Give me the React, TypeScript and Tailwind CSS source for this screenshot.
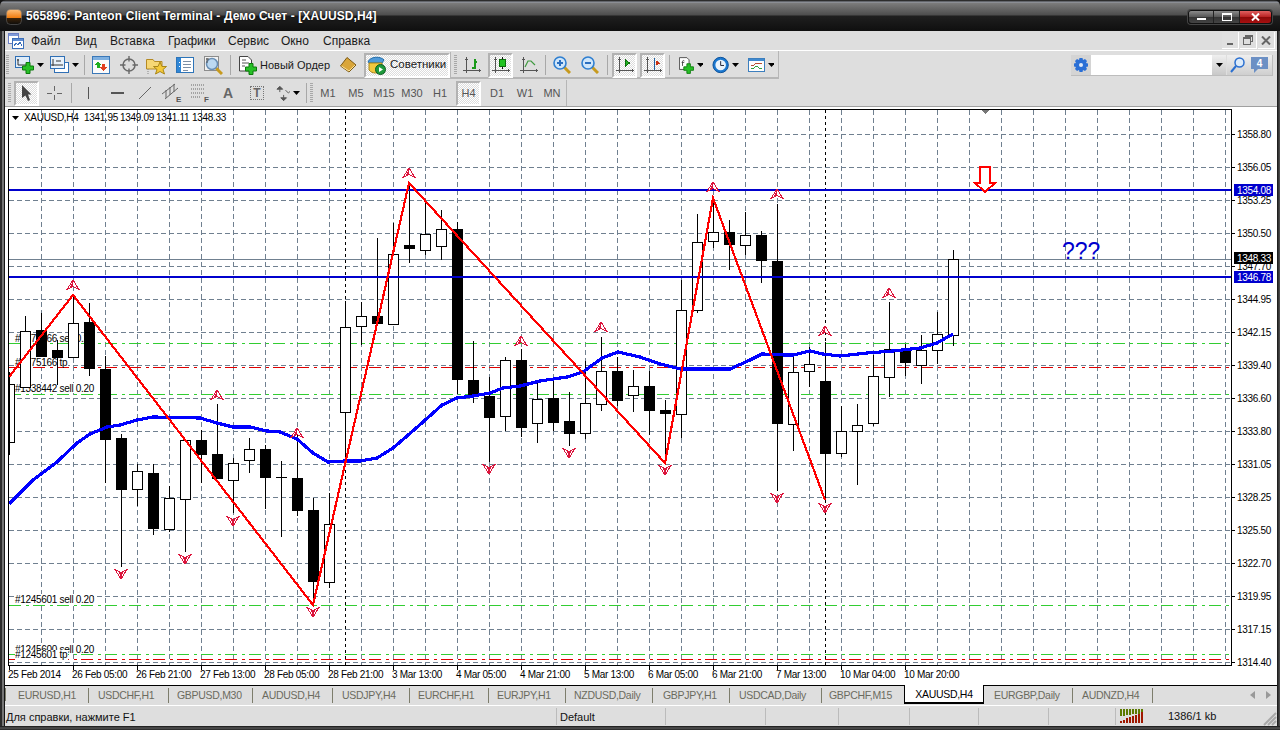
import React from "react";

const F = "font-['Liberation_Sans',Arial,sans-serif]";
type C = [number, number, number, number, number, 0 | 1];
// x, high, bodyTop, bodyBottom, low, black
const candles: C[] = [
  [9, 372, 384, 442, 455, 0], [25, 316, 331, 387, 387, 0], [41, 313, 330, 357, 357, 1], [57, 340, 350, 358, 385, 1],
  [73, 295, 323, 357, 357, 0], [89, 303, 322, 369, 376, 1], [105, 356, 369, 440, 483, 1], [121, 434, 438, 490, 567, 1],
  [137, 464, 471, 489, 506, 0], [153, 464, 473, 529, 535, 1], [169, 486, 498, 529, 532, 0], [185, 440, 440, 499, 552, 0],
  [201, 430, 440, 455, 483, 1], [217, 404, 454, 479, 479, 1], [233, 458, 463, 480, 513, 0], [249, 438, 449, 460, 473, 0],
  [265, 445, 449, 478, 509, 1], [281, 461, 477, 478, 537, 1], [297, 432, 478, 511, 516, 1], [313, 498, 510, 582, 605, 1],
  [329, 493, 524, 582, 588, 0], [345, 301, 327, 412, 460, 0], [361, 302, 316, 326, 345, 0], [377, 238, 316, 324, 324, 1],
  [393, 223, 254, 324, 324, 0], [409, 183, 245, 249, 263, 1], [425, 200, 234, 250, 255, 0], [441, 210, 229, 246, 260, 0],
  [457, 222, 229, 380, 394, 1], [473, 341, 380, 395, 403, 1], [489, 377, 396, 418, 462, 1], [505, 357, 360, 416, 431, 0],
  [521, 349, 360, 428, 437, 1], [537, 383, 399, 423, 443, 0], [553, 380, 398, 423, 431, 1], [569, 392, 421, 434, 446, 1],
  [585, 361, 403, 433, 439, 0], [601, 337, 371, 404, 411, 0], [617, 357, 371, 401, 406, 1], [633, 370, 386, 395, 412, 0],
  [649, 371, 386, 411, 435, 1], [665, 400, 410, 414, 462, 1], [681, 280, 310, 414, 438, 0], [697, 214, 242, 310, 313, 0],
  [713, 197, 232, 241, 248, 0], [729, 220, 232, 245, 270, 1], [745, 212, 235, 245, 255, 0], [761, 231, 235, 261, 283, 1],
  [777, 204, 261, 424, 491, 1], [793, 357, 372, 424, 451, 0], [809, 347, 364, 371, 387, 0], [825, 342, 381, 454, 500, 1],
  [841, 406, 431, 453, 457, 0], [857, 404, 425, 431, 485, 0], [873, 355, 376, 423, 426, 0], [889, 302, 349, 377, 397, 0],
  [905, 344, 350, 363, 376, 1], [921, 335, 350, 365, 384, 0], [937, 312, 334, 350, 364, 0], [953, 250, 259, 335, 346, 0],
];
const ups = [[73, 285], [217, 395], [297, 433], [409, 173], [521, 341], [601, 327], [713, 187], [777, 194], [825, 331], [889, 293]];
const downs = [[121, 574], [185, 559], [233, 521], [313, 612], [489, 469], [569, 453], [665, 470], [777, 498], [825, 508]];
const zig = "9,377 73,295 313,605 409,183 665,463 713,198 825,500";
const ma = "9,504 13,500 33,480 57,462 77,443 90,434 107,427 120,425 137,420 153,417 200,418 217,423 233,427 250,427 267,431 280,432 297,439 313,453 328,462 345,461 360,461 377,458 393,448 407,436 423,422 442,405 457,398 473,396 490,393 503,388 520,386 540,381 567,377 583,372 602,358 618,352 640,357 660,364 681,369 723,369 730,369 750,360 762,354 785,355 793,355 810,351 823,354 840,356 867,353 893,351 920,348 937,343 953,334";
const prices = ["1358.80", "1356.05", "1353.25", "1350.50", "1347.70", "1344.95", "1342.15", "1339.40", "1336.60", "1333.80", "1331.05", "1328.25", "1325.50", "1322.70", "1319.95", "1317.15", "1314.40"];
const times = ["26 Feb 05:00", "26 Feb 21:00", "27 Feb 13:00", "28 Feb 05:00", "28 Feb 21:00", "3 Mar 13:00", "4 Mar 05:00", "4 Mar 21:00", "5 Mar 13:00", "6 Mar 05:00", "6 Mar 21:00", "7 Mar 13:00", "10 Mar 04:00", "10 Mar 20:00"];
const vgrid = Array.from({ length: 38 }, (_, i) => 41.5 + i * 32);
const hgrid = Array.from({ length: 17 }, (_, i) => 134.5 + i * 33);
const TXT = { fontFamily: "'Liberation Sans',Arial,sans-serif", fontSize: 10, letterSpacing: -0.3, fill: "#000" };
const labels: [string, number, number][] = [
  ["#1375166 sell 0.20", 338, 78], ["#1375166 tp", 362, 53], ["#1338442 sell 0.20", 388, 78], ["#1245601 sell 0.20", 599, 78], ["#1245600 sell 0.20", 649, 78], ["#1245601 tp", 654.5, 53],
];

function Chart() {
  return (
    <svg width="1272" height="579" viewBox="5 106 1272 579" className="block bg-white">
      <g shapeRendering="crispEdges">
        <rect x="5" y="106" width="1272" height="1" fill="#a0a0a0" />
        <g stroke="#708090" strokeDasharray="5 3">
          {hgrid.map((y) => <line key={y} x1="9" x2="1231" y1={y} y2={y} />)}
          {vgrid.map((x) => <line key={x} x1={x} x2={x} y1="110" y2="665" />)}
        </g>
        <g stroke="#000" strokeDasharray="3 3">
          <line x1="345.5" x2="345.5" y1="110" y2="665" />
          <line x1="825.5" x2="825.5" y1="110" y2="665" />
        </g>
        <line x1="9" x2="1231" y1="259.5" y2="259.5" stroke="#708090" />
        <g strokeDasharray="12 5 3 4">
          <g stroke="#32cd32">
            <line x1="9" x2="1231" y1="343.5" y2="343.5" />
            <line x1="9" x2="1231" y1="394.5" y2="394.5" />
            <line x1="9" x2="1231" y1="605.5" y2="605.5" />
            <line x1="9" x2="1231" y1="654.5" y2="654.5" />
          </g>
          <g stroke="#e00000">
            <line x1="9" x2="1231" y1="367.5" y2="367.5" />
            <line x1="9" x2="1231" y1="659.5" y2="659.5" />
          </g>
        </g>
      </g>
      {labels.map(([t, c, w]) => (
        <g key={t + c}>
          <rect x="15" y={c - 5} width={w} height="10" fill="#fff" shapeRendering="crispEdges" />
          <text x="15" y={c + 3.5} {...TXT}>{t}</text>
        </g>
      ))}
      <g shapeRendering="crispEdges">
        {candles.map(([x, h, t, b, l, k]) => (
          <g key={x}>
            <line x1={x + 0.5} x2={x + 0.5} y1={h} y2={l} stroke="#000" />
            {k
              ? <rect x={Math.max(x - 5, 9)} y={t} width={x - 5 < 9 ? x + 6 - 9 : 11} height={Math.max(b - t, 1)} fill="#000" />
              : <rect x={Math.max(x - 4.5, 9.5)} y={t + 0.5} width={x - 5 < 9 ? x + 5 - 9 : 10} height={b - t} fill="#fff" stroke="#000" />}
          </g>
        ))}
        <rect x="9" y="189" width="1222" height="2" fill="#0000cd" />
        <rect x="9" y="276" width="1222" height="2" fill="#0000cd" />
        <polyline points={ma} fill="none" stroke="#0000ff" strokeWidth="3.2" />
        <polyline points={zig} fill="none" stroke="#ff0000" strokeWidth="2.2" />
      </g>
      {ups.map(([x, y]) => (
        <g key={`${x}u`} transform={`translate(${x} ${y})`} shapeRendering="crispEdges">
          <path d="M-6 4.5L0-5 6 4.5 0 1.5Z" fill="#fff" stroke="#dc143c" />
          <path d="M-3.5 3L0-4V1Z" fill="#dc143c" />
        </g>
      ))}
      {downs.map(([x, y]) => (
        <g key={`${x}d`} transform={`translate(${x} ${y})`} shapeRendering="crispEdges">
          <path d="M-6-4.5L0 5 6-4.5 0-1.5Z" fill="#fff" stroke="#dc143c" />
          <path d="M-2-2L0 4 3-3 0-1Z" fill="#dc143c" />
        </g>
      ))}
      <path d="M979.5 166.5H989.5V182.5H995.5L985 192 974.5 182.5H979.5Z" fill="#fff" stroke="#ff0000" strokeWidth="2" shapeRendering="crispEdges" />
      <path d="M980 109H990L985 114Z" fill="#777" shapeRendering="crispEdges" />
      <g fontFamily="'Liberation Sans',Arial,sans-serif" fontSize="23" fill="#0000cd"><text x="1062" y="259">???</text></g>
      <path d="M12 116H19L15.5 120Z" fill="#000" />
      <g {...TXT}>
        <text x="24" y="121">XAUUSD,H4</text>
        <text x="84" y="121">1341.95</text>
        <text x="120" y="121">1349.09</text>
        <text x="156" y="121">1341.11</text>
        <text x="192" y="121">1348.33</text>
      </g>
      <rect x="8.5" y="109.5" width="1223" height="556" fill="none" stroke="#000" shapeRendering="crispEdges" />
      <g stroke="#000" shapeRendering="crispEdges">
        {hgrid.map((y) => <line key={y} x1="1232" x2="1235" y1={y} y2={y} />)}
        {[9.5, ...times.map((_, i) => 73.5 + i * 64)].map((x) => <line key={x} x1={x} x2={x} y1="666" y2="670" />)}
      </g>
      <g {...TXT}>
        {prices.map((p, i) => <text key={p} x="1237" y={138 + i * 33}>{p}</text>)}
        <text x="8" y="678">25 Feb 2014</text>
        {times.map((t, i) => <text key={t} x={72 + i * 64} y="678">{t}</text>)}
      </g>
      <rect x="1234" y="184" width="39" height="12" fill="#0000cd" shapeRendering="crispEdges" />
      <rect x="1234" y="252" width="39" height="12" fill="#000" shapeRendering="crispEdges" />
      <rect x="1234" y="271" width="39" height="12" fill="#0000cd" shapeRendering="crispEdges" />
      <g {...TXT} fill="#fff">
        <text x="1237" y="194">1354.08</text>
        <text x="1237" y="262">1348.33</text>
        <text x="1237" y="281">1346.78</text>
      </g>
    </svg>
  );
}

const Plus = ({ x, y, s = 1 }: { x: number; y: number; s?: number }) => (
  <path transform={`translate(${x} ${y}) scale(${s})`} d="M3.5 0H7.5V3.5H11V7.5H7.5V11H3.5V7.5H0V3.5H3.5Z" fill="#27c027" stroke="#0c7a0c" strokeWidth="1" />
);
const Drop = () => (
  <svg width="7" height="4" className="ml-[3px]"><path d="M0 0H7L3.5 4Z" fill="#000" /></svg>
);
const Axes = ({ c }: { c?: React.ReactNode }) => (
  <svg width="18" height="18" viewBox="0 0 18 18" shapeRendering="crispEdges">
    <path d="M3.5 1V17M0 14.5H18" stroke="#555" fill="none" />
    <path d="M2 3H5M16 13V16" stroke="#555" fill="none" />
    {c}
  </svg>
);
const Mag = ({ minus }: { minus?: boolean }) => (
  <svg width="18" height="18" viewBox="0 0 18 18">
    <path d="M11 11L17 17" stroke="#c79a1e" strokeWidth="3" />
    <circle cx="7" cy="7" r="6" fill="#cfe6fa" stroke="#2f7fd0" strokeWidth="1.6" />
    <path d={minus ? "M4 7H10" : "M4 7H10M7 4V10"} stroke="#2a6fc0" strokeWidth="2" />
  </svg>
);
const Sep = ({ cn }: { cn: string }) => <div className={`w-px h-[20px] bg-[#a8a8a8] shrink-0 ${cn}`} />;
const Grip = ({ cn }: { cn: string }) => (
  <div className={`w-[3px] h-[20px] shrink-0 bg-[repeating-linear-gradient(180deg,#a8a8a8_0px,#a8a8a8_1px,#dedede_1px,#dedede_2px)] ${cn}`} />
);
const PR = "border-2 border-t-[#b2b2b2] border-l-[#b2b2b2] border-r-white border-b-white bg-[repeating-conic-gradient(#ffffff_0%_25%,#dcdcdc_0%_50%)] bg-[length:2px_2px]";

const tabs: [string, string][] = [
  ["EURUSD,H1", "w-[83px] pl-[12px]"], ["USDCHF,H1", "w-[80px] pl-[9px]"], ["GBPUSD,M30", "w-[84px] pl-[8px]"], ["AUDUSD,H4", "w-[80px] pl-[9px]"],
  ["USDJPY,H4", "w-[77px] pl-[9px]"], ["EURCHF,H1", "w-[79px] pl-[8px]"], ["EURJPY,H1", "w-[77px] pl-[8px]"], ["NZDUSD,Daily", "w-[87px] pl-[8px]"],
  ["GBPJPY,H1", "w-[77px] pl-[10px]"], ["USDCAD,Daily", "w-[92px] pl-[9px]"],
];
const seps = ["ml-[551px]", "ml-[108px]", "ml-[99px]", "ml-[72px]", "ml-[70px]", "ml-[68px]", "ml-[69px]", "ml-[66px]"];

export default function App() {
  return (
    <div className={`w-[1280px] h-[730px] overflow-hidden flex flex-col bg-[#141414] ${F}`}>
      <div className="h-[31px] shrink-0 flex bg-[linear-gradient(180deg,#2c2c2c_0px,#2c2c2c_1px,#9aa0ac_2px,#7c7c7c_3px,#4d4d4d_15px,#1f1f1f_16px,#0f0f0f_31px)] rounded-t-[6px]">
        <svg width="16" height="16" viewBox="0 0 16 16" className="ml-[6px] mt-[9px]">
          <defs>
            <linearGradient id="lg" x1="0" y1="0" x2="0" y2="1"><stop offset="0" stopColor="#ffc07a" /><stop offset=".55" stopColor="#f07c10" /><stop offset=".6" stopColor="#3a2208" /><stop offset="1" stopColor="#0c0c0c" /></linearGradient>
          </defs>
          <rect x="0.5" y="0.5" width="15" height="15" rx="4" fill="url(#lg)" stroke="#777" strokeWidth=".5" />
        </svg>
        <span className="ml-[4px] mt-[9px] text-[12px] leading-[15px] font-bold tracking-[0.1px] text-white [text-shadow:0_0_2px_#000] whitespace-nowrap">565896: Panteon Client Terminal - Демо Счет - [XAUUSD,H4]</span>
        <div className="ml-auto mr-[8px] mt-[10px] h-[14px] flex rounded-[3px] border border-[#111] shadow-[0_0_0_1px_#444]">
          <div className="w-[25px] flex items-center justify-center rounded-l-[3px] border-r border-[#222] bg-[linear-gradient(180deg,#8a8a8a,#555_50%,#333_50%,#444)]">
            <div className="w-[9px] h-[2px] bg-white mt-[4px]" />
          </div>
          <div className="w-[26px] flex items-center justify-center border-r border-[#222] bg-[linear-gradient(180deg,#8a8a8a,#555_50%,#333_50%,#444)]">
            <div className="w-[10px] h-[8px] border border-t-2 border-white" />
          </div>
          <div className="w-[31px] flex items-center justify-center rounded-r-[3px] bg-[linear-gradient(180deg,#e06060,#b82020_50%,#8a0808_50%,#a81010)]">
            <svg width="9" height="8" viewBox="0 0 9 8"><path d="M1 0.5L8 7.5M8 0.5L1 7.5" stroke="#fff" strokeWidth="2" /></svg>
          </div>
        </div>
      </div>
      <div className="flex-1 flex min-h-0">
        <div className="w-[5px] shrink-0 bg-[linear-gradient(90deg,#2a2a2a_0px,#2a2a2a_2px,#757575_2px,#757575_4px,#141414_4px)]" />
        <div className="w-[1272px] flex flex-col bg-[#dedede]">
          <div className="h-[20px] shrink-0 flex items-center border-b border-white text-[12px] text-[#1a1a1a]">
            <svg width="16" height="16" viewBox="0 0 16 16" className="ml-[3px]" shapeRendering="crispEdges">
              <rect x=".5" y=".5" width="10" height="10" fill="#fff" stroke="#6b7fc4" />
              <rect x="1" y="1" width="9" height="2" fill="#7f9ad8" />
              <rect x="4.5" y="5.5" width="11" height="10" fill="#fff" stroke="#3b6fb8" />
              <rect x="5" y="6" width="10" height="2" fill="#5d8ad0" />
              <path d="M6 13L8 10 10 12 12 9 14 13" stroke="#3b6fb8" fill="none" />
            </svg>
            <span className="ml-[7px] w-[44px]">Файл</span>
            <span className="w-[35px]">Вид</span>
            <span className="w-[58px]">Вставка</span>
            <span className="w-[60px]">Графики</span>
            <span className="w-[53px]">Сервис</span>
            <span className="w-[42px]">Окно</span>
            <span>Справка</span>
            <div className="ml-auto mr-[2px] flex gap-[1px]">
              <div className="w-[17px] h-[17px] border-r border-b border-white bg-[#e0e0e0] flex items-end justify-center pb-[3px]"><div className="w-[6px] h-[2px] bg-[#666]" /></div>
              <div className="w-[17px] h-[17px] border-r border-b border-white flex items-center justify-center">
                <svg width="10" height="10" viewBox="0 0 10 10" shapeRendering="crispEdges"><path d="M2.5 2.5V.5H9.5V6.5H7.5M.5 2.5H7.5V9.5H.5Z" fill="none" stroke="#666" /><path d="M2 1H9M0 3H7" stroke="#666" /></svg>
              </div>
              <div className="w-[17px] h-[17px] border-r border-b border-white flex items-center justify-center">
                <svg width="10" height="9" viewBox="0 0 10 9"><path d="M1 .5L9 8.5M9 .5L1 8.5" stroke="#666" strokeWidth="2" /></svg>
              </div>
            </div>
          </div>
          <div className="h-[28px] shrink-0 flex items-center">
            <div className="h-[28px] w-[774px] pt-[2px] flex items-center border-b-2 border-r border-[#b6b6b6]">
              <Grip cn="ml-[1px]" />
              <div className="ml-[6px] w-[29px] flex items-center shrink-0">
                <svg width="19" height="18" viewBox="0 0 19 18"><rect x=".5" y=".5" width="14" height="11" fill="#dfecf8" stroke="#2f6fb5" /><path d="M3 3V9H12M2 4H4" stroke="#333" fill="none" /><Plus x={7.5} y={6.5} /></svg>
                <Drop />
              </div>
              <div className="ml-[6px] w-[29px] flex items-center shrink-0">
                <svg width="19" height="18" viewBox="0 0 19 18"><rect x="4.5" y="6.5" width="14" height="10" fill="#fff" stroke="#2f6fb5" /><rect x=".5" y=".5" width="14" height="12" fill="#e8f1fa" stroke="#2f6fb5" /><path d="M3 3V10M1 9H13M6 5H11" stroke="#333" fill="none" /></svg>
                <Drop />
              </div>
              <Sep cn="ml-[5px]" />
              <div className="ml-[7px] w-[18px] shrink-0">
                <svg width="18" height="18" viewBox="0 0 18 18" shapeRendering="crispEdges"><rect x=".5" y=".5" width="17" height="17" fill="#fbfbfb" stroke="#3a78b8" /><rect x="1" y="1" width="16" height="3" fill="#7fb0e0" /><path d="M6 5L9.5 9H7.5V12H4.5V9H2.5Z" fill="#1fae1f" /><path d="M10 8H13V11H15L11.5 15 8 11H10Z" fill="#e04020" /></svg>
              </div>
              <div className="ml-[10px] w-[18px] shrink-0">
                <svg width="18" height="18" viewBox="0 0 18 18"><circle cx="9" cy="9" r="6" fill="none" stroke="#6a6a6a" strokeWidth="1.5" /><path d="M9 0V5.5M9 12.5V18M0 9H5.5M12.5 9H18" stroke="#6a6a6a" strokeWidth="1.4" /></svg>
              </div>
              <div className="ml-[8px] w-[20px] shrink-0">
                <svg width="21" height="19" viewBox="0 0 21 19"><path d="M.5 3.5H7L8.5 5.5H16V13H.5Z" fill="#f6d775" stroke="#b58a24" /><path d="M14 6L16 10.5H20.5L17 13.5 18.5 18 14 15.5 9.5 18 11 13.5 7.5 10.5H12Z" fill="#f4c93a" stroke="#a98618" /><path d="M2 13V18" stroke="#888" strokeDasharray="1 1" /></svg>
              </div>
              <div className="ml-[10px] w-[19px] shrink-0">
                <svg width="18" height="18" viewBox="0 0 18 18" shapeRendering="crispEdges"><rect x=".5" y="1.5" width="17" height="15" rx="1" fill="#fff" stroke="#2d74b8" /><rect x="1" y="2" width="4" height="14" fill="#2f86d6" /><path d="M7 5H15M7 8H15M7 11H15M7 14H12" stroke="#7d8fa5" /><path d="M3 6H4M3 10H4" stroke="#fff" /></svg>
              </div>
              <div className="ml-[9px] w-[19px] shrink-0">
                <svg width="19" height="19" viewBox="0 0 19 19"><rect x=".5" y=".5" width="14" height="14" fill="#f2f2f2" stroke="#8c8c8c" /><path d="M12 12L18 18" stroke="#c79a1e" strokeWidth="3" /><circle cx="8" cy="8" r="5.5" fill="#bcd9f2" stroke="#6a8fb5" strokeWidth="1.5" /><path d="M3 2V7M2 3H5" stroke="#555" /></svg>
              </div>
              <Sep cn="ml-[7px]" />
              <div className="ml-[8px] w-[93px] flex items-center shrink-0 text-[11px] text-[#1a1a1a] whitespace-nowrap">
                <svg width="18" height="19" viewBox="0 0 18 19" className="shrink-0"><path d="M.5.5H9L12.5 4V15H.5Z" fill="#fff" stroke="#444" /><path d="M3 4H7M3 7H10M3 10H6" stroke="#555" /><Plus x={6.5} y={7.5} /></svg>
                <span className="ml-[3px]">Новый Ордер</span>
              </div>
              <div className="ml-[8px] w-[17px] shrink-0">
                <svg width="17" height="16" viewBox="0 0 17 16"><path d="M.5 9L7 .5 16 8 9 15Z" fill="#d9a63a" stroke="#7d5a14" /><path d="M1.5 9L9 14 15 8" fill="none" stroke="#fbe29a" /></svg>
              </div>
              <div className={`ml-[7px] w-[86px] h-[25px] flex items-center shrink-0 text-[11.5px] text-[#1a1a1a] whitespace-nowrap ${PR}`}>
                <svg width="19" height="19" viewBox="0 0 19 19" className="ml-[1px] shrink-0"><path d="M1 6C3 0 14 0 17 4L15 7H3Z" fill="#4f9ad8" stroke="#1f6aa8" /><path d="M2 7H15V14C12 18 5 18 2 14Z" fill="#f2c83e" stroke="#a8861a" /><circle cx="13.5" cy="13.5" r="5" fill="#1e9a3c" stroke="#0b5d20" /><path d="M12 11V16L16 13.5Z" fill="#fff" /></svg>
                <span className="ml-[4px]">Советники</span>
              </div>
              <div className="w-px h-[26px] bg-[#b6b6b6] shrink-0" />
              <Grip cn="ml-[3px]" />
              <div className="ml-[6px] w-[18px] shrink-0"><Axes c={<path d="M9 12H12V6H14M12 3V6" stroke="#1a9a1a" strokeWidth="1.4" fill="none" />} /></div>
              <div className={`ml-[7px] w-[25px] h-[25px] flex items-center justify-center shrink-0 ${PR}`}><Axes c={<><path d="M10.5 1V13" stroke="#111" /><rect x="7.5" y="3.5" width="6" height="7" fill="#22c322" stroke="#0b6d0b" /></>} /></div>
              <div className="ml-[7px] w-[18px] shrink-0"><Axes c={<path d="M5 11L8 5 11 5 15 9" stroke="#3f9a3f" strokeWidth="1.2" fill="none" shapeRendering="auto" />} /></div>
              <Sep cn="ml-[7px]" />
              <div className="ml-[7px] w-[18px] shrink-0"><Mag /></div>
              <div className="ml-[10px] w-[18px] shrink-0"><Mag minus /></div>
              <Sep cn="ml-[8px]" />
              <div className={`ml-[4px] w-[25px] h-[25px] flex items-center justify-center shrink-0 ${PR}`}><Axes c={<path d="M9 3.5V10.5L13.5 7Z" fill="#1fb01f" stroke="#0b6d0b" />} /></div>
              <div className={`ml-[3px] w-[25px] h-[25px] flex items-center justify-center shrink-0 ${PR}`}><Axes c={<><path d="M10.5 2V14" stroke="#2060a0" /><path d="M16 7H12M15 7L12 5V9Z" stroke="#c83010" fill="#c83010" /></>} /></div>
              <Sep cn="ml-[4px]" />
              <div className="ml-[9px] w-[24px] flex items-center shrink-0">
                <svg width="17" height="19" viewBox="0 0 17 19"><path d="M.5.5H9L11.5 3V14H.5Z" fill="#fff" stroke="#444" /><path d="M4 10V5C4 3.5 6 3.5 6 4.5M3 6H6" stroke="#444" fill="none" /><Plus x={5.5} y={7.5} /></svg>
                <Drop />
              </div>
              <div className="ml-[9px] w-[27px] flex items-center shrink-0">
                <svg width="18" height="18" viewBox="0 0 18 18"><circle cx="9" cy="9" r="8" fill="#1b78d0" stroke="#0b4f98" /><circle cx="9" cy="9" r="5.5" fill="#eaf3fb" /><path d="M9 5V9.5H12.5" stroke="#223" fill="none" /></svg>
                <Drop />
              </div>
              <div className="ml-[9px] w-[26px] flex items-center shrink-0">
                <svg width="18" height="16" viewBox="0 0 18 16" shapeRendering="crispEdges"><rect x=".5" y=".5" width="17" height="15" fill="#fdfdfd" stroke="#2d74b8" /><rect x="1" y="1" width="16" height="3" fill="#3f8ad0" /><path d="M3 8H7L9 6H15" stroke="#b04020" fill="none" /><path d="M3 12H6L8 10H11L13 12H15" stroke="#1f9a2f" fill="none" /></svg>
                <Drop />
              </div>
            </div>
            <div className="ml-auto mr-[4px] self-start mt-[4px] h-[21px] w-[202px] flex border-b border-r border-[#bdbdbd]">
              <div className="w-[20px] flex items-center justify-center bg-[#d4d4d4]">
                <svg width="14" height="14" viewBox="0 0 14 14"><path d="M5.5 0H8.5L9 2 11 1 13 3 12 5 14 5.5V8.5L12 9 13 11 11 13 9 12 8.5 14H5.5L5 12 3 13 1 11 2 9 0 8.5V5.5L2 5 1 3 3 1 5 2Z" fill="#2a6fd6" /><circle cx="7" cy="7" r="2" fill="#dfe9f8" /></svg>
              </div>
              <div className="w-[121px] bg-white" />
              <div className="w-[14px] flex items-center justify-center bg-[linear-gradient(180deg,#efefef,#c8c8c8)]"><svg width="7" height="4"><path d="M0 0H7L3.5 4Z" fill="#000" /></svg></div>
              <div className="w-[20px] ml-px flex items-center justify-center bg-[linear-gradient(180deg,#efefef,#cfcfcf)]">
                <svg width="15" height="16" viewBox="0 0 15 16"><circle cx="9.5" cy="5.5" r="4.5" fill="#dcebfa" stroke="#2a6fd0" strokeWidth="1.5" /><path d="M6 9L1 15" stroke="#2a6fd0" strokeWidth="2" /></svg>
              </div>
              <div className="flex-1 flex items-center justify-center bg-[linear-gradient(180deg,#efefef,#cfcfcf)]">
                <svg width="17" height="16" viewBox="0 0 17 16"><path d="M0 0H17V12H7L3 16V12H0Z" fill="#6c90c4" /><text x="8.5" y="10" textAnchor="middle" fontSize="10" fontWeight="700" fill="#fff" fontFamily="'Liberation Sans',sans-serif">4</text></svg>
              </div>
            </div>
          </div>
          <div className="h-[27px] pt-px shrink-0 flex items-center">
            <Grip cn="ml-[3px]" />
            <div className={`ml-[3px] w-[25px] h-[25px] flex items-center justify-center shrink-0 ${PR}`}>
              <svg width="10" height="16" viewBox="0 0 10 16"><path d="M0 0L9.5 9.5H6L8 15 6 16 3.5 10.5 0 13Z" fill="#444" /></svg>
            </div>
            <div className="ml-[5px] w-[20px] shrink-0">
              <svg width="18" height="18" viewBox="0 0 18 18" className="mx-auto" shapeRendering="crispEdges"><path d="M9.5 2V7M9.5 11V16M2 9.5H7M12 9.5H17" stroke="#666" fill="none" /></svg>
            </div>
            <Sep cn="ml-[7px]" />
            <div className="ml-[6px] w-[20px] shrink-0"><svg width="20" height="14" viewBox="0 0 20 14" shapeRendering="crispEdges"><path d="M10.5 1V13" stroke="#555" strokeWidth="1.5" /></svg></div>
            <div className="ml-[9px] w-[20px] shrink-0"><svg width="20" height="4" viewBox="0 0 20 4" shapeRendering="crispEdges"><path d="M4 2H17" stroke="#555" strokeWidth="1.5" /></svg></div>
            <div className="ml-[8px] w-[20px] shrink-0"><svg width="20" height="14" viewBox="0 0 20 14"><path d="M4 13L16 1" stroke="#666" /></svg></div>
            <div className="ml-[6px] w-[22px] shrink-0">
              <svg width="22" height="20" viewBox="0 0 22 20"><path d="M1 11L14 1M4 16L17 5M5 7V15M9 4V12M13 1V9" stroke="#666" fill="none" /><text x="15" y="19" fontSize="8" fontWeight="700" fill="#555" fontFamily="'Liberation Sans',sans-serif">E</text></svg>
            </div>
            <div className="ml-[6px] w-[22px] shrink-0">
              <svg width="22" height="20" viewBox="0 0 22 20"><path d="M2 2H16M2 6H16M2 10H16M2 14H12" stroke="#666" strokeDasharray="1 1" /><text x="15" y="19" fontSize="8" fontWeight="700" fill="#555" fontFamily="'Liberation Sans',sans-serif">F</text></svg>
            </div>
            <div className="ml-[7px] w-[20px] shrink-0 text-center text-[14px] font-bold text-[#666]">A</div>
            <div className="ml-[9px] w-[20px] shrink-0 flex justify-center">
              <div className="w-[14px] h-[14px] border border-dotted border-[#777] text-center text-[12px] leading-[12px] font-bold text-[#666]">T</div>
            </div>
            <div className="ml-[9px] w-[24px] flex items-center shrink-0">
              <svg width="15" height="15" viewBox="0 0 15 15"><path d="M4 0L7 3H1ZM4 3V6" fill="#555" stroke="#555" /><path d="M8 15L5 12H11ZM8 12V9" fill="#555" stroke="#555" /><path d="M10 4L13 7 15 5" stroke="#555" fill="none" /></svg>
              <Drop />
            </div>
            <Sep cn="ml-[6px]" />
            <Grip cn="ml-[3px]" />
            <div className="text-[11px] text-[#555] flex items-center">
              <span className="ml-[2px] w-[26px] text-center">M1</span>
              <span className="ml-[2px] w-[26px] text-center">M5</span>
              <span className="ml-[2px] w-[26px] text-center">M15</span>
              <span className="ml-[2px] w-[26px] text-center">M30</span>
              <span className="ml-[2px] w-[26px] text-center">H1</span>
              <span className={`ml-[3px] w-[25px] h-[25px] flex items-center justify-center ${PR}`}>H4</span>
              <span className="ml-[3px] w-[26px] text-center">D1</span>
              <span className="ml-[2px] w-[26px] text-center">W1</span>
              <span className="ml-[1px] w-[26px] text-center">MN</span>
            </div>
            <div className="ml-[1px] w-px h-[26px] bg-[#b6b6b6]" />
          </div>
          <div className="h-[579px] shrink-0"><Chart /></div>
          <div className="h-[20px] shrink-0 flex border-t border-black text-[10.5px] tracking-[-0.3px] text-[#6b6b5e] whitespace-nowrap">
            <div className="h-[13px] mt-[2px] w-px bg-[#7d7d6c]" />
            {tabs.map(([t, w]) => (
              <div key={t} className={`${w} h-[15px] mt-[2px] leading-[14px] border-r border-[#7d7d6c] shrink-0`}>{t}</div>
            ))}
            <div className="w-[82px] pl-[7px] h-[15px] mt-[2px] leading-[14px] shrink-0">GBPCHF,M15</div>
            <div className="w-[80px] h-[19px] -mt-px bg-white border-l border-r border-b-2 border-black text-black text-center leading-[19px] shrink-0">XAUUSD,H4</div>
            <div className="w-[89px] pl-[10px] h-[15px] mt-[2px] leading-[14px] border-r border-[#7d7d6c] shrink-0">EURGBP,Daily</div>
            <div className="w-[80px] pl-[9px] h-[15px] mt-[2px] leading-[14px] border-r border-[#7d7d6c] shrink-0">AUDNZD,H4</div>
            <div className="ml-auto mr-[6px] flex gap-[11px] items-center h-[18px]">
              <svg width="5" height="8"><path d="M5 0V8L0 4Z" fill="#999" /></svg>
              <svg width="5" height="8"><path d="M0 0V8L5 4Z" fill="#999" /></svg>
            </div>
          </div>
          <div className="h-px shrink-0 bg-white" />
          <div className="h-[20px] shrink-0 flex items-center text-[11px] text-[#111] whitespace-nowrap relative">
            <span className="absolute left-[1px] top-[3px]">Для справки, нажмите F1</span>
            <span className="absolute left-[555px] top-[3px]">Default</span>
            {seps.map((s) => <div key={s} className={`${s} w-[1px] h-[17px] bg-white border-l border-[#bbb] shrink-0`} />)}
            <svg width="24" height="14" viewBox="0 0 24 14" className="ml-[4px] shrink-0" shapeRendering="crispEdges">
              {[0, 1, 2, 3, 4, 5, 6, 7].map((i) => (
                <g key={i}>
                  <rect x={i * 3} y={0} width="2" height={7 - i * 0.4} fill="#5c7a00" />
                  <rect x={i * 3} y={13 - (i + 1) * 1.2} width="2" height={(i + 1) * 1.2 + 1} fill="#a01800" />
                </g>
              ))}
            </svg>
            <span className="ml-[24px]">1386/1 kb</span>
            <svg width="15" height="15" viewBox="0 0 15 15" className="absolute right-0 bottom-0"><path d="M14 2L2 14M14 6L6 14M14 10L10 14" stroke="#a9a9a9" strokeWidth="2" /></svg>
          </div>
        </div>
        <div className="w-[3px] shrink-0 bg-[linear-gradient(90deg,#141414,#555)]" />
      </div>
      <div className="h-[4px] shrink-0 bg-[linear-gradient(180deg,#111,#555_50%,#222)]" />
    </div>
  );
}
